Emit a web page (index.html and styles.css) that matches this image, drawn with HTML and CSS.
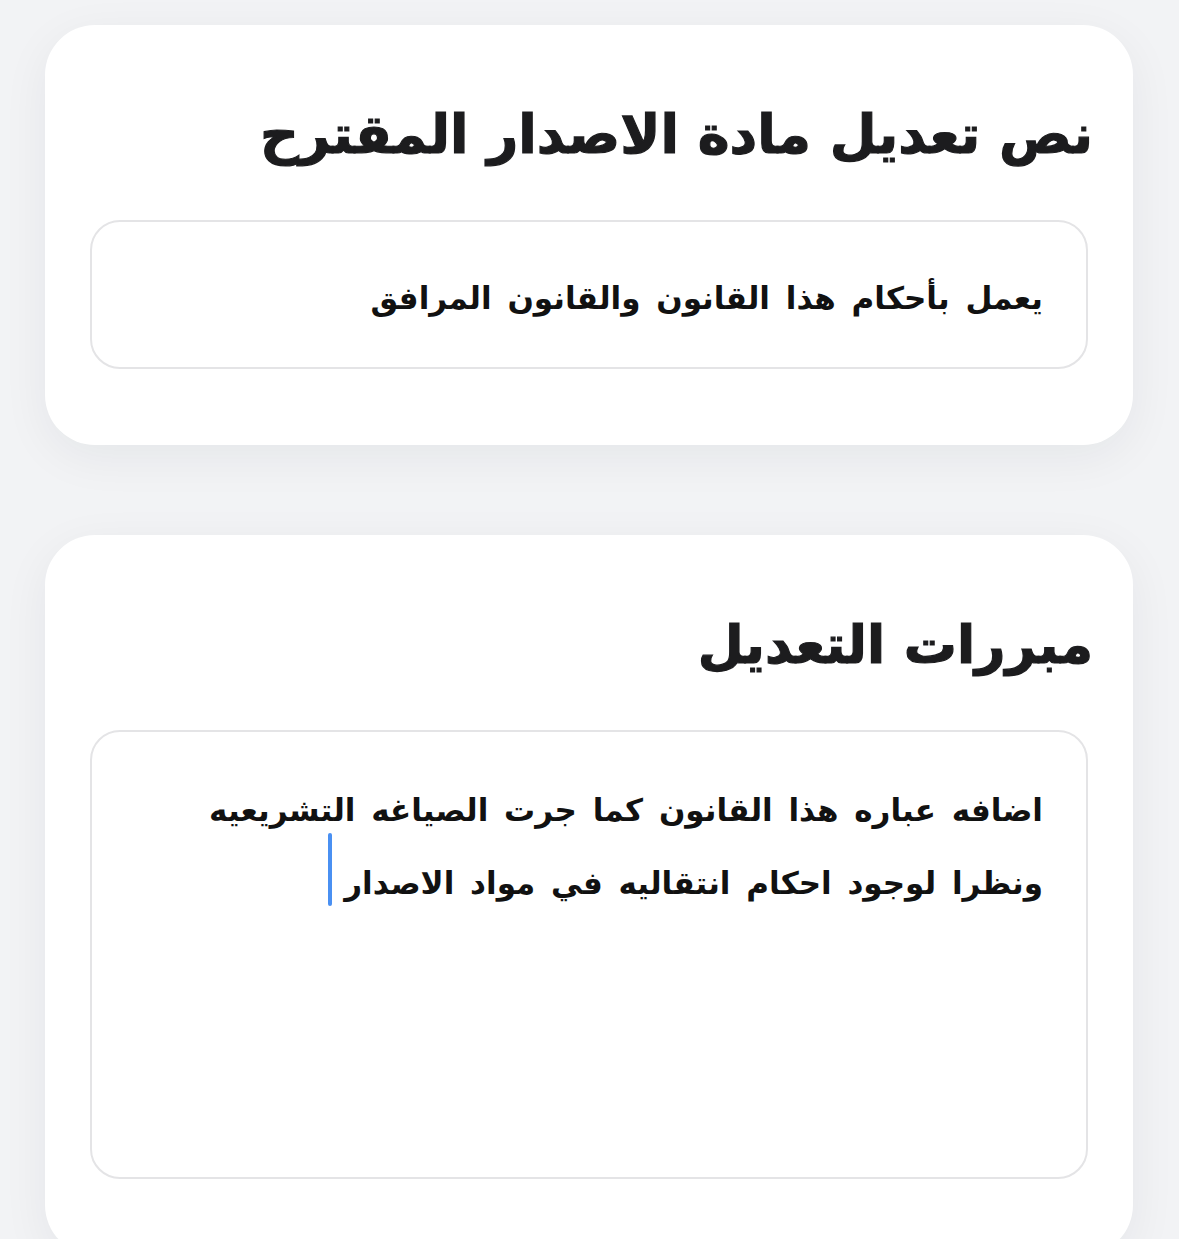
FILE: index.html
```html
<!DOCTYPE html>
<html lang="ar" dir="rtl">
<head>
<meta charset="utf-8">
<title>تعديل</title>
<link rel="stylesheet" href="styles.css">
</head>
<body>
<main class="page">
  <section class="card card-first">
    <h2 class="card-title">نص تعديل مادة الاصدار المقترح</h2>
    <div class="field field-short">
      <p class="field-text">يعمل بأحكام هذا القانون والقانون المرافق</p>
    </div>
  </section>
  <section class="card card-second">
    <h2 class="card-title">مبررات التعديل</h2>
    <div class="field field-tall">
      <p class="field-text multi">اضافه عباره هذا القانون كما جرت الصياغه التشريعيه ونظرا لوجود احكام انتقاليه في مواد الاصدار<span class="caret"></span></p>
    </div>
  </section>
</main>
</body>
</html>
```
FILE: styles.css
```css
* { box-sizing: border-box; }
html, body { margin: 0; padding: 0; }
body {
  background: #f2f3f5;
  font-family: "DejaVu Sans", "Noto Sans", sans-serif;
  color: #1c1c1e;
}
.page {
  display: flex;
  flex-direction: column;
  gap: 90px;
  padding: 25px 46px 40px 45px;
}
.card {
  background: #ffffff;
  border-radius: 50px;
  box-shadow: 0 12px 48px rgba(20, 30, 50, 0.06);
  padding: 0 45px 76px 45px;
}
.card-first { padding-top: 70px; }
.card-second { padding-top: 70px; }
.card-title {
  margin: 0 -5px 45px 0;
  font-size: 54px;
  line-height: 80px;
  font-weight: 700;
  color: #1c1c1e;
  -webkit-text-stroke: 1.2px #1c1c1e;
}
.card-second .card-title { font-size: 53px; }
.field {
  border: 2px solid #e4e4e6;
  border-radius: 30px;
  background: #fff;
  padding: 0 43px;
}
.field-short {
  height: 149px;
  display: flex;
  align-items: center;
}
.field-tall {
  height: 449px;
  padding-top: 42px;
}
.field-text {
  margin: 0;
  font-size: 31px;
  font-weight: 700;
  color: #111;
  line-height: 73px;
  word-spacing: 5px;
}
.field-short .field-text { margin-top: 8px; }
.multi { padding-left: 30px; }
.caret {
  display: inline-block;
  position: relative;
  top: -14px;
  width: 4px;
  height: 73px;
  background: #4a90f2;
  border-radius: 2px;
  vertical-align: top;
  margin-right: 12px;
}
```
